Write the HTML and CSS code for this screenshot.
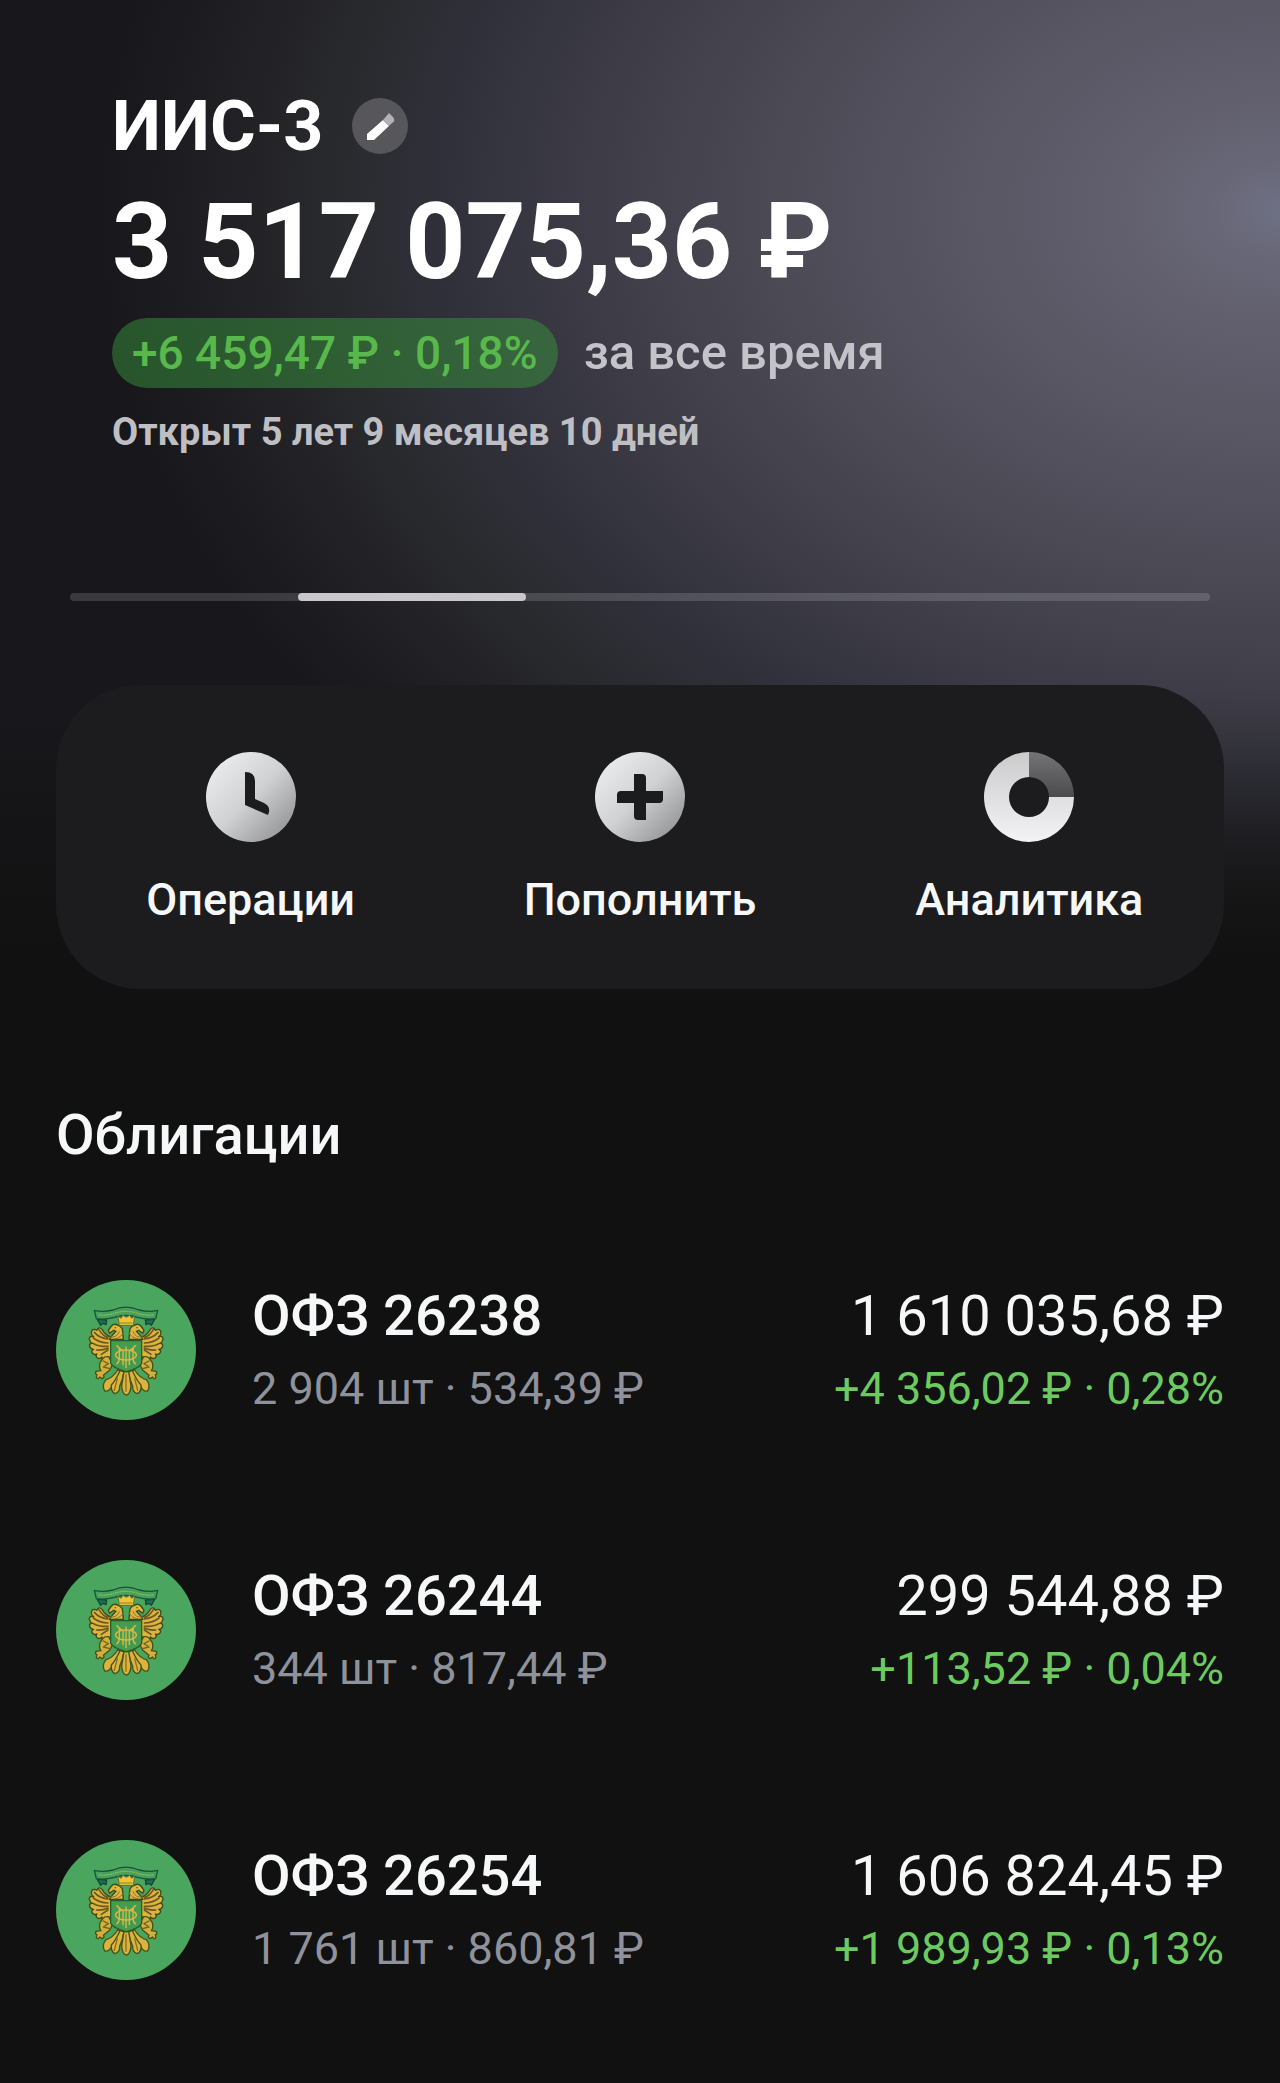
FILE: index.html
```html
<!DOCTYPE html>
<html lang="ru">
<head>
    <meta charset="UTF-8">
    <meta name="viewport" content="width=device-width, initial-scale=1.0">
    <title>ИИС-3</title>
    <link rel="stylesheet" href="styles.css">
</head>
<body>
    <!-- Emblem shared by all bond rows -->
    <svg class="sprite" aria-hidden="true">
        <symbol id="emblem" viewBox="18 30 420 420">
            <circle cx="228" cy="240" r="210" fill="#4aa55e"/>
            <g stroke-linejoin="round" stroke-linecap="round">
                <!-- ribbon -->
                <path d="M142 148l28 2-2 14-8-4-8 6zM314 148l-28 2 2 14 8-4 8 6z" fill="#246f50" stroke="#124a34" stroke-width="4"/>
                <path d="M133 121q26 7 56-1 39-17 78 0 30 8 56 1l-6 25q-26 4-54-4-35-11-70 0-28 8-54 4z" fill="#48a05c" stroke="#14553a" stroke-width="4"/>
                <path d="M148 135q22 2 45-5 35-12 70 0 23 7 45 5" fill="none" stroke="#8fb85a" stroke-width="4" stroke-dasharray="2 5"/>
                <!-- tail -->
                <g fill="#dcb33c" stroke="#42521c" stroke-width="4">
                    <path d="M203 300q-15 24-35 29-14 17-4 34 14 2 20-12 22-16 32-48z"/>
                    <path d="M254 300q15 24 35 29 14 17 4 34-14 2-20-12-22-16-32-48z"/>
                    <path d="M210 302q-13 29-26 43-2 22 12 26 14-5 13-22 9-19 13-44z"/>
                    <path d="M247 302q13 29 26 43 2 22-12 26-14-5-13-22-9-19-13-44z"/>
                    <path d="M222 304l-7 44q2 25 14 27 12-2 14-27l-7-44z"/>
                    <path d="M228 314v50M202 326l-9 35M254 326l9 35" fill="none" stroke="#896f22"/>
                </g>
                <g id="wing">
                    <path d="M183 201q-16-4-27-23-9-10-15 3-16-8-17 8 1 8 7 11-13-4-13 7 2 11 10 13-11-1-9 9 3 9 12 9-9 3-4 11 6 7 14 3-6 6 1 12 7 4 14-3-2 10 7 11 11-3 20-13z" fill="#dfb43d" stroke="#3a4a19" stroke-width="4"/>
                    <path d="M133 187q14 16 40 20M130 204q18 14 44 15M131 221q16 9 43 8M140 240q15 2 34-5M154 253l20-13M147 179q12 20 27 23" fill="none" stroke="#6a5822" stroke-width="5"/>
                    <!-- foot -->
                    <path d="M176 260q-13-1-17 5l-9 13q-4 15 3 24l-15 2q-4 8 3 10l-2 9q6 7 10-2l8 5q8-4 3-10l20-17 8-17z" fill="#d5ae3b" stroke="#42521c" stroke-width="4"/>
                    <path d="M160 273l15 8-15 10 20 5" fill="none" stroke="#6d6626" stroke-width="4"/>
                    <!-- head and neck -->
                    <path d="M220 208h-42l10-14 10-10-7-3-12 9-4-9 7-10q9-13 22-5 14 4 14 18z" fill="#e2b73e" stroke="#3a4a19" stroke-width="4"/>
                    <path d="M180 201q21 3 28-16M192 207q22-4 28-19" fill="none" stroke="#8c7127" stroke-width="3"/>
                    <circle cx="196" cy="173" r="2" fill="#294929"/>
                </g>
                <use href="#wing" transform="translate(457 0) scale(-1 1)"/>
                <path d="M208 165l-4-27 9 7 6-9 10 6 10-6 6 9 9-7-4 27z" fill="#edc53b" stroke="#66702a" stroke-width="3"/>
                <path d="M211 159h35" stroke="#987e25" stroke-width="3"/>
                <!-- shield with monogram -->
                <path d="M182 212h93v68q-5 14-46 26-41-12-47-26z" fill="#459b50" stroke="#2b5b29" stroke-width="4"/>
                <path d="M200 227q8 3 8 14v24q0 12-8 17M257 227q-8 3-8 14v24q0 12 8 17M208 234l11 8v42M249 234l-11 8v42M228 231v62" fill="none" stroke="#dbba41" stroke-width="4"/>
                <ellipse cx="228" cy="255" rx="31" ry="15" fill="none" stroke="#dbba41" stroke-width="4"/>
            </g>
        </symbol>
    </svg>

    <header class="hero">
        <div class="account">
            <div class="account-name">
                <h1>ИИС-3</h1>
                <button class="edit" type="button" aria-label="Изменить">
                    <svg viewBox="0 0 56 56" aria-hidden="true">
                        <path d="M15 42v-6l16-14 6 6-15 14z" fill="#fff"/>
                        <path d="M31 22l6-7 4 4q3 4-1 6l-3 3z" fill="#b2b1b5"/>
                    </svg>
                </button>
            </div>
            <p class="balance">3 517 075,36 ₽</p>
            <div class="profit">
                <span class="profit-badge">+6 459,47 ₽ · 0,18%</span>
                <span class="period">за все время</span>
            </div>
            <p class="opened">Открыт 5 лет 9 месяцев 10 дней</p>
        </div>

        <div class="pager">
            <span></span>
            <span class="active"></span>
            <span></span>
            <span></span>
            <span></span>
        </div>

        <nav class="actions">
            <button type="button">
                <svg viewBox="0 0 90 90" aria-hidden="true">
                    <defs>
                        <linearGradient id="silver" x1="0.1" y1="0.1" x2="0.9" y2="0.9">
                            <stop offset="0" stop-color="#ebeced"/>
                            <stop offset="0.5" stop-color="#cfd1d2"/>
                            <stop offset="1" stop-color="#959597"/>
                        </linearGradient>
                    </defs>
                    <circle cx="45" cy="45" r="45" fill="url(#silver)"/>
                    <path d="M39 20q10 0 10 9v18l9 4q6 3 5 9l-1 3-23-10z" fill="#1c1c1e"/>
                </svg>
                Операции
            </button>
            <button type="button">
                <svg viewBox="0 0 90 90" aria-hidden="true">
                    <circle cx="45" cy="45" r="45" fill="url(#silver)"/>
                    <path d="M39 22h8q4 0 4 4v13h17v8q0 4-4 4H51v17h-8q-4 0-4-4V51H22v-8q0-4 4-4h13z" fill="#1c1c1e"/>
                </svg>
                Пополнить
            </button>
            <button type="button">
                <svg viewBox="0 0 90 90" aria-hidden="true">
                    <defs>
                        <linearGradient id="ring" x1="0" y1="0" x2="0" y2="1">
                            <stop offset="0" stop-color="#cbcbcc"/>
                            <stop offset="1" stop-color="#f3f3f5"/>
                        </linearGradient>
                        <linearGradient id="slice" x1="0" y1="0" x2="0" y2="1">
                            <stop offset="0" stop-color="#747476"/>
                            <stop offset="1" stop-color="#4b4b4d"/>
                        </linearGradient>
                    </defs>
                    <path d="M45 0v25a20 20 0 1 0 20 20h25A45 45 0 1 1 45 0z" fill="url(#ring)"/>
                    <path d="M45 0a45 45 0 0 1 45 45H65a20 20 0 0 0-20-20z" fill="url(#slice)"/>
                </svg>
                Аналитика
            </button>
        </nav>
    </header>

    <main class="bonds">
        <h2>Облигации</h2>
        <ul class="bond-list">
            <li class="bond">
                <svg class="bond-logo" aria-hidden="true"><use href="#emblem"/></svg>
                <div class="bond-info">
                    <span class="bond-main bond-name">ОФЗ 26238</span>
                    <span class="bond-sub">2 904 шт · 534,39 ₽</span>
                </div>
                <div class="bond-value">
                    <span class="bond-main">1 610 035,68 ₽</span>
                    <span class="bond-sub gain">+4 356,02 ₽ · 0,28%</span>
                </div>
            </li>
            <li class="bond">
                <svg class="bond-logo" aria-hidden="true"><use href="#emblem"/></svg>
                <div class="bond-info">
                    <span class="bond-main bond-name">ОФЗ 26244</span>
                    <span class="bond-sub">344 шт · 817,44 ₽</span>
                </div>
                <div class="bond-value">
                    <span class="bond-main">299 544,88 ₽</span>
                    <span class="bond-sub gain">+113,52 ₽ · 0,04%</span>
                </div>
            </li>
            <li class="bond">
                <svg class="bond-logo" aria-hidden="true"><use href="#emblem"/></svg>
                <div class="bond-info">
                    <span class="bond-main bond-name">ОФЗ 26254</span>
                    <span class="bond-sub">1 761 шт · 860,81 ₽</span>
                </div>
                <div class="bond-value">
                    <span class="bond-main">1 606 824,45 ₽</span>
                    <span class="bond-sub gain">+1 989,93 ₽ · 0,13%</span>
                </div>
            </li>
        </ul>
    </main>
</body>
</html>
```
FILE: styles.css
```css
* {
    box-sizing: border-box;
}
body {
    margin: 0;
    background-color: #111;
    color: #f6f7f8;
    font-family: Roboto, sans-serif;
}
h1, h2, p, ul {
    margin: 0;
    padding: 0;
}
button {
    border: none;
    padding: 0;
    background: none;
    color: inherit;
    font-family: inherit;
    cursor: pointer;
}
.sprite {
    display: block;
    width: 0;
    height: 0;
}
.hero {
    padding: 84px 56px 0;
    background:
        linear-gradient(to bottom, rgba(17, 17, 17, 0) 690px, rgba(17, 17, 17, 0.1) 740px, rgba(17, 17, 17, 0.4) 807px, rgba(17, 17, 17, 0.75) 877px, #111 960px),
        radial-gradient(1200px 860px at 100% 210px, #6e7084 0, #686777 70px, #605e6c 180px, #585663 320px, #4b4a55 500px, #403f49 660px, #30303a 840px, #28292c 960px, #1f1e22 1080px, #18171b 1180px);
}
.account {
    padding: 0 56px;
}
.account-name {
    display: flex;
    align-items: center;
    gap: 28px;
}
h1 {
    font-size: 70px;
    line-height: 84px;
    font-weight: 700;
    color: #fff;
}
.edit {
    width: 56px;
    height: 56px;
    border-radius: 50%;
    background-color: #57565b;
}
.edit svg {
    display: block;
}
.balance {
    margin-top: 15px;
    font-size: 105px;
    line-height: 120px;
    font-weight: 700;
    color: #fff;
}
.profit {
    display: flex;
    align-items: center;
    gap: 26px;
    margin-top: 15px;
    line-height: 70px;
    font-weight: 500;
}
.profit-badge {
    padding: 0 20px;
    border-radius: 35px;
    background-color: rgba(56, 147, 60, 0.5);
    color: #59b84b;
    font-size: 46px;
}
.period {
    color: #c4c3c9;
    font-size: 49px;
}
.opened {
    margin-top: 20px;
    font-size: 38px;
    line-height: 48px;
    font-weight: 700;
    color: #bfbfc3;
}
.pager {
    display: flex;
    height: 8px;
    margin: 137px 14px 0;
    border-radius: 4px;
    background-color: rgba(255, 255, 255, 0.15);
}
.pager span {
    flex: 1;
    border-radius: 4px;
}
.pager .active {
    background-color: #c9c7cb;
}
.actions {
    display: grid;
    grid-template-columns: repeat(3, 1fr);
    margin-top: 84px;
    padding: 67px 0 61px;
    border-radius: 84px;
    background-color: #1c1c1e;
}
.actions button {
    display: flex;
    flex-direction: column;
    align-items: center;
    gap: 30px;
    font-size: 45px;
    line-height: 56px;
    font-weight: 500;
}
.actions svg {
    width: 90px;
    height: 90px;
}
.bonds {
    padding: 114px 56px 103px;
}
h2 {
    font-size: 56px;
    line-height: 64px;
    font-weight: 500;
}
.bond-list {
    display: flex;
    flex-direction: column;
    gap: 140px;
    margin-top: 113px;
    list-style-type: none;
}
.bond {
    display: flex;
    align-items: center;
}
.bond-logo {
    width: 140px;
    height: 140px;
    margin-right: 56px;
}
.bond-info, .bond-value {
    display: flex;
    flex-direction: column;
    gap: 13px;
}
.bond-value {
    margin-left: auto;
    text-align: right;
}
.bond-main {
    font-size: 56px;
    line-height: 64px;
}
.bond-name {
    font-weight: 500;
}
.bond-sub {
    font-size: 45px;
    line-height: 56px;
    color: #8f929b;
}
.bond-sub.gain {
    color: #6ccb5f;
}
```
